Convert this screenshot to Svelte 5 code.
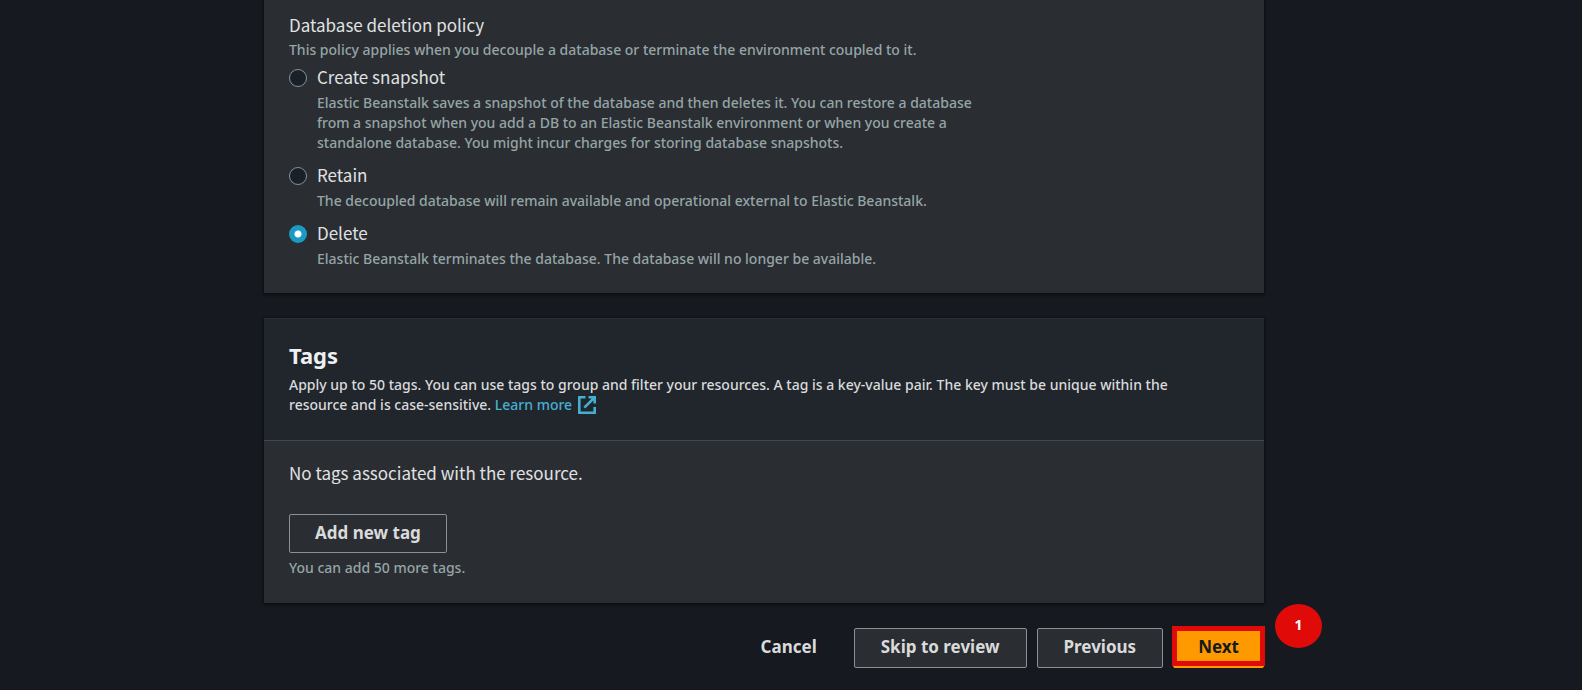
<script lang="ts">
  const policies = [
    {
      value: 'snapshot',
      label: 'Create snapshot',
      description:
        'Elastic Beanstalk saves a snapshot of the database and then deletes it. You can restore a database from a snapshot when you add a DB to an Elastic Beanstalk environment or when you create a standalone database. You might incur charges for storing database snapshots.'
    },
    {
      value: 'retain',
      label: 'Retain',
      description:
        'The decoupled database will remain available and operational external to Elastic Beanstalk.'
    },
    {
      value: 'delete',
      label: 'Delete',
      description:
        'Elastic Beanstalk terminates the database. The database will no longer be available.'
    }
  ];

  let policy = $state('delete');
</script>

<main>
  <section class="card policy">
    <fieldset aria-describedby="policy-hint">
      <legend>Database deletion policy</legend>
      <p class="hint" id="policy-hint">
        This policy applies when you decouple a database or terminate the environment coupled to it.
      </p>
      <div class="options">
        {#each policies as option}
          <div class="option">
            <input
              type="radio"
              name="policy"
              id={option.value}
              value={option.value}
              aria-describedby="{option.value}-hint"
              bind:group={policy}
            />
            <div class="option-text">
              <label for={option.value}>{option.label}</label>
              <p class="hint" id="{option.value}-hint">{option.description}</p>
            </div>
          </div>
        {/each}
      </div>
    </fieldset>
  </section>

  <section class="card">
    <header>
      <h2>Tags</h2>
      <p>
        Apply up to 50 tags. You can use tags to group and filter your resources. A tag is a
        key-value pair. The key must be unique within the resource and is case-sensitive.
        <a href="#learn-more">Learn more<svg viewBox="0 0 18 18" aria-hidden="true">
            <path d="M7.5 1.3H1.3v15.4h15.4V11M10.5 1.3h6.2v6.2M16.5 1.5 6.3 11.7" />
          </svg></a>
      </p>
    </header>
    <div class="tags-body">
      <p>No tags associated with the resource.</p>
      <button type="button" class="add">Add new tag</button>
      <p class="hint">You can add 50 more tags.</p>
    </div>
  </section>

  <footer>
    <button type="button" class="link">Cancel</button>
    <button type="button">Skip to review</button>
    <button type="button">Previous</button>
    <div class="next-step">
      <button type="button" class="primary">Next</button>
      <span class="outline"></span>
      <span class="marker">1</span>
    </div>
  </footer>
</main>

<style>
  :global(body) {
    margin: 0;
    background: #16191f;
  }

  main {
    box-sizing: border-box;
    max-width: 1054px;
    margin: 0 auto;
    padding: 0 54px 22px 0;
    display: flex;
    flex-direction: column;
    gap: 25px;
    font-family: 'Noto Sans CJK SC', 'Noto Sans', sans-serif;
    font-size: 17px;
    line-height: 25px;
    color: #e0e2e2;
  }

  p,
  h2 {
    margin: 0;
  }

  .card {
    background: #2a2d32;
    box-shadow: 0 1px 2px 1px #0d0f13;
  }

  .policy {
    padding: 12px 25px 24px;
  }

  fieldset {
    margin: 0;
    padding: 0;
    border: 0;
    min-width: 0;
  }

  legend {
    padding: 0;
    margin-bottom: 3px;
  }

  .hint,
  header p {
    font-family: 'Noto Sans', 'Open Sans', sans-serif;
    font-size: 14px;
    font-weight: 500;
    line-height: 20px;
  }

  .hint {
    color: #95a5a6;
  }

  header p {
    max-width: 920px;
    color: #d9dbdb;
  }

  .options {
    display: flex;
    flex-direction: column;
    gap: 9px;
    margin-top: 4px;
  }

  .option {
    display: flex;
    gap: 10px;
  }

  .option-text {
    display: flex;
    flex-direction: column;
    align-items: flex-start;
    gap: 4px;
    max-width: 675px;
  }

  input {
    appearance: none;
    box-sizing: border-box;
    flex: none;
    width: 18px;
    height: 18px;
    margin: 5px 0 0;
    border: 1px solid #879196;
    border-radius: 50%;
    background: #1a2029;
  }

  input:checked {
    border: 0;
    background: radial-gradient(circle, #fff 3px, #1a9bc4 4px);
  }

  header {
    padding: 21px 25px 25px;
    background: #21252c;
    border-top: 1px solid #2b3036;
    border-bottom: 1px solid #414750;
  }

  h2 {
    margin-bottom: 5px;
    font-family: 'Noto Sans', 'Open Sans', sans-serif;
    font-size: 22px;
    line-height: 30px;
    color: #eef0f2;
  }

  header a {
    color: #44b0d0;
    text-decoration: none;
  }

  svg {
    width: 18px;
    height: 18px;
    margin: -4px 0 -4px 6px;
    vertical-align: baseline;
    fill: none;
    stroke: currentColor;
    stroke-width: 2.6;
  }

  .tags-body {
    padding: 19px 25px 25px;
  }

  button {
    box-sizing: border-box;
    height: 40px;
    padding: 0 26px 4px;
    border: 1px solid #879196;
    border-radius: 2px;
    background: #2a2d32;
    color: #d9dbdb;
    font: inherit;
    font-family: 'Noto Sans', 'Open Sans', sans-serif;
    font-weight: 700;
    cursor: pointer;
  }

  .add {
    display: block;
    height: 39px;
    margin: 29px 0 5px;
    padding: 0 25px 2px;
  }

  footer {
    display: flex;
    justify-content: flex-end;
    gap: 10px;
  }

  .link {
    border-color: transparent;
    background: transparent;
  }

  .next-step {
    position: relative;
  }

  .primary {
    padding: 0 24px 4px;
    border-color: #f90;
    background: #f90;
    color: #16191f;
  }

  .outline {
    position: absolute;
    inset: -2px -1px 2px;
    border: 5px solid #e00b08;
    pointer-events: none;
  }

  .marker {
    position: absolute;
    left: calc(100% + 11px);
    top: -24px;
    width: 47px;
    height: 44px;
    border-radius: 50%;
    background: #e00b08;
    color: #fff;
    font: 700 14px/42px 'Open Sans', sans-serif;
    text-align: center;
  }
</style>
